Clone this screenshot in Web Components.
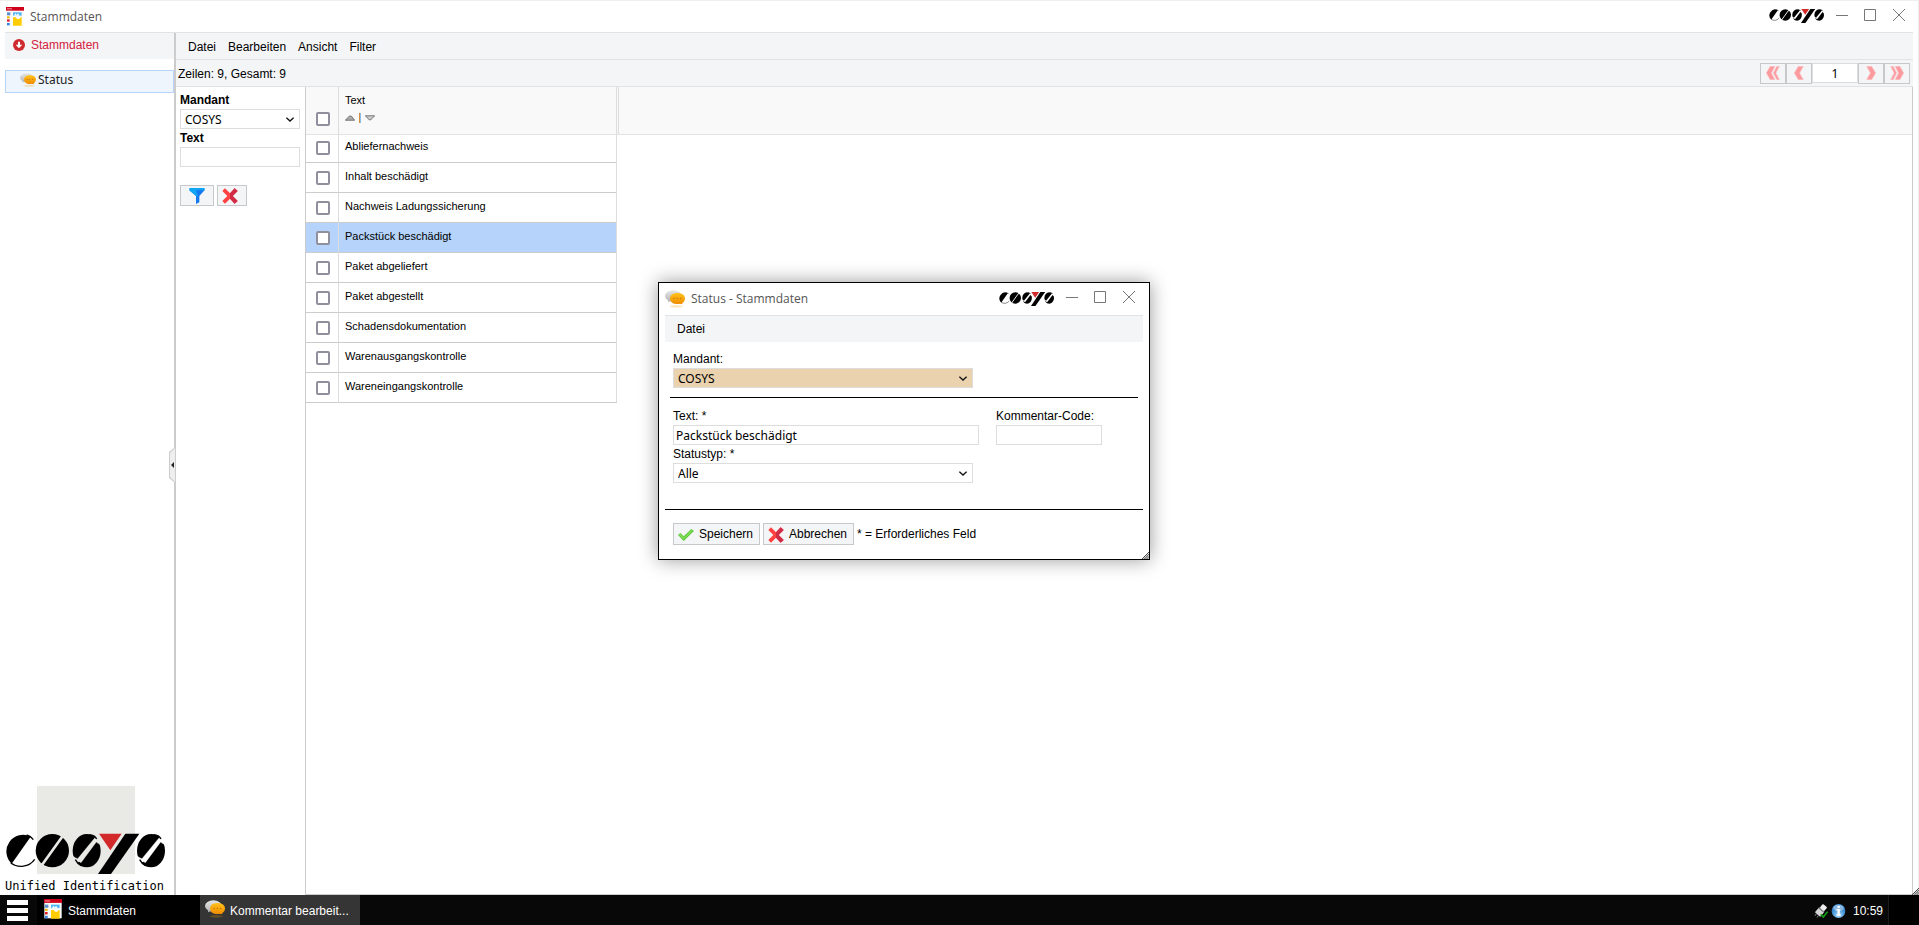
<!DOCTYPE html>
<html lang="de">
<head>
<meta charset="utf-8">
<title>Stammdaten</title>
<style>
  html, body { height: 100%; }
  body { margin: 0; overflow: hidden; font: 12px/16px "Liberation Sans", Arial, sans-serif; color: #000; background: #fff; }
</style>
</head>
<body>
<cosys-desktop></cosys-desktop>
<script>
const UI = '"Noto Sans", "Open Sans", sans-serif';
const base = `*, *::before { box-sizing: border-box; } button, input, select { font: inherit; color: inherit; margin: 0; }`;

function define(name, html) {
  const template = document.createElement('template');
  customElements.define(name, class extends HTMLElement {
    constructor() {
      super();
      this.attachShadow({ mode: 'open' });
    }
    connectedCallback() {
      if (this.shadowRoot.childNodes.length) return;
      template.innerHTML = typeof html === 'function' ? html(this) : html;
      this.shadowRoot.append(template.content.cloneNode(true));
    }
  });
}

const icons = {
  app: ['0 0 54 57', `<path fill="#fafbfc" d="M1 9h52v46H1z"/><path fill="#d0021b" d="M0 0h54v11H0z"/><path fill="#f49aa6" d="M3 4h15v3H3z"/><path fill="#5d8fd0" d="M3 16h10v9H3z"/><path fill="#f6b800" d="M3 28h8v6H3z"/><path fill="#e02030" d="M3 37h8v7H3z"/><path fill="#2d7fe0" d="M3 48h8v7H3z"/><path fill="#50b4f5" d="M21 16h26v10H21z"/><path fill="#fff" d="M24 26l4-7 4 5 4-5 5 7z"/><path fill="#fc0" d="M21 31h8l4 5h7l4-5h3v25H21z"/>`],
  chat: ['0 0 60 54', `<defs><linearGradient id="a" x2="0" y2="1"><stop stop-color="#ffc21c"/><stop offset="1" stop-color="#f08c00"/></linearGradient><linearGradient id="b" x2="0" y2="1"><stop stop-color="#e6e6e6"/><stop offset="1" stop-color="#b5b5b5"/></linearGradient></defs><ellipse cx="34" cy="49" rx="20" ry="4" fill="#f5a000" opacity=".25"/><path fill="#bbb" d="M10 28l-1 9 10-5z"/><ellipse cx="25" cy="18" rx="25" ry="17" fill="url(#b)"/><path fill="#f08c00" d="M51 36l1 7-10-3z"/><rect x="15" y="9" width="45" height="33" rx="20" ry="16" fill="url(#a)"/><g fill="#b56a00"><circle cx="27" cy="25" r="2"/><circle cx="37" cy="25" r="2"/><circle cx="47" cy="25" r="2"/></g>`],
  down: ['0 0 36 36', `<circle cx="18" cy="18" r="18" fill="#cf2a2e"/><path fill="#fff" d="M15 8h6v9h7L18 28 8 17h7z"/>`],
  funnel: ['0 0 48 48', `<path fill="#1478f0" d="M0 5h48L31 24v19l-10 5V24z"/><path fill="#10a5f5" d="M1 0h46v7H1zM0 7h21l6 17-4 1z"/>`],
  cross: ['0 0 48 48', `<path fill="#ff4141" d="M9 1l15 15L38 1l9 8-15 15 15 15-9 8-14-15L9 47l-8-8 15-15L1 9z"/><path fill="#d02c46" d="M38 1l9 8-15 15 15 15-9 8-14-15V16z"/>`],
  check: ['0 0 48 36', `<path fill="#5dc93c" d="M0 18l7-6 10 10L40 0l8 6-31 30z"/><path fill="#8be05e" d="M3 18l4-3 10 11L40 4l3 2-26 25z"/>`],
  prev: ['0 0 30 40', `<path fill="#fc9a9e" stroke="#f7c4c7" stroke-width="2" d="M13 1h15L17 20l11 19H13L1 20z"/>`],
  first: ['0 0 44 40', `<g fill="#fc9a9e" stroke="#f7c4c7" stroke-width="2"><path d="M13 1h15L17 20l11 19H13L1 20z"/><path d="M34 1h8L31 20l11 19h-8L23 20z"/></g>`],
  up: ['0 0 28 16', `<path fill="#aaa" stroke="#555" stroke-width="2" d="M1 14h26L18 3h-6z"/>`],
  triDown: ['0 0 28 16', `<path fill="#ccc" stroke="#555" stroke-width="2" d="M1 2h26L16 13h-4z"/>`],
  chevron: ['0 0 22 14', `<path fill="none" stroke="#111" stroke-width="4" d="M1 2l10 9L21 2"/>`],
  min: ['0 0 36 36', `<path stroke="#777" stroke-width="3" d="M0 19.500h36"/>`],
  max: ['0 0 36 36', `<path fill="none" stroke="#777" stroke-width="3" d="M1.500 1.500h33v33h-33z"/>`],
  close: ['0 0 36 36', `<path stroke="#777" stroke-width="3" d="M0 0l36 36M36 0L0 36"/>`],
  bars: ['0 0 63 63', `<path fill="#fff" d="M0 0h63v15H0zM0 24h63v15H0zM0 48h63v15H0z"/>`],
  plug: ['0 0 42 42', `<g transform="rotate(40 20 20)"><rect x="12" y="0" width="17" height="15" rx="3" fill="#eee"/><rect x="10" y="15" width="21" height="20" rx="2" fill="#d5d5d5"/><path fill="#777" d="M10 16h21v3H10zM15 35h3v8h-3zM23 35h3v8h-3z"/></g><path fill="none" stroke="#12a012" stroke-width="5" d="M20 31l8 8 13-16"/>`],
  info: ['0 0 46 42', `<defs><radialGradient id="c" cx=".5" cy=".8"><stop stop-color="#a9dcff"/><stop offset="1" stop-color="#3b8ad0"/></radialGradient></defs><circle cx="23" cy="21" r="21" fill="url(#c)"/><ellipse cx="23" cy="12" rx="16" ry="10" fill="#fff" opacity=".4"/><path fill="#fff" d="M20 6h7v6h-7zM17 15h10v16h3v4H17v-4h3V19h-3z"/>`],
  grip: ['0 0 8 8', `<path fill="none" stroke="#333" d="M0 8l8-8M2 8l6-6M4 8l4-4M6 8l2-2"/>`]
};

define('ui-icon', el => {
  const [box, art] = icons[el.getAttribute('name')];
  const w = el.getAttribute('w'), h = el.getAttribute('h') || w;
  return `<style>:host{display:inline-block;flex:none;width:${w}px;height:${h}px}svg{display:block;width:100%;height:100%}:host([flip]) svg{transform:rotate(180deg)}</style><svg viewBox="${box}" preserveAspectRatio="none" aria-hidden="true">${art}</svg>`;
});

/* Company word mark; the "plate" attribute adds the grey square behind it. */
define('cosys-logo', el => {
  const plate = el.hasAttribute('plate');
  return `<style>:host{display:block;flex:none}svg{display:block;width:100%;height:auto}</style>
<svg viewBox="${plate ? '15 48 480 264' : '15 190 480 124'}" role="img" aria-label="COSYS">
<defs><mask id="m" maskUnits="userSpaceOnUse" x="0" y="0" width="520" height="330"><path fill="#fff" d="M0 0h520v330H0z"/><path stroke="#000" stroke-width="8" d="M192 193L121 292"/><path stroke="#000" d="M284 204l8 4 16-2v22l-14-8-5-4-46 62-5-3-28 8v-30l16 10 7 3z"/><path stroke="#000" d="M477 204l8 4 16-2v22l-14-8-5-4-46 62-5-3-28 8v-30l16 10 7 3z"/></mask></defs>
${plate ? '<path fill="#e9eae6" d="M111 48h294v264H111z"/>' : ''}
<path d="M92 200A50 50 0 0 0 35 281z"/>
<path fill="none" stroke="#000" stroke-width="4" d="M80 195q12 3 20 14M32 278A50 50 0 0 0 104 268"/>
<g mask="url(#m)"><circle cx="157" cy="242" r="50"/><ellipse cx="260" cy="242" rx="42" ry="50"/><ellipse cx="453" cy="242" rx="42" ry="50"/></g>
<path fill="none" stroke="#000" stroke-width="4" d="M268 194q16 1 22 13M226 269q6 12 18 18M461 194q16 1 22 13M419 269q6 12 18 18"/>
<path fill="#d2292b" d="M297 191h68l-34 50z"/><path d="M376 191h42l-85 121h-39z"/></svg>`;
});

/* Window caption: icon, title, logo and the three window buttons. */
define('window-caption', `<style>${base}
:host{display:flex;align-items:center;height:32px;font-family:"Open Sans","Noto Sans",sans-serif;color:#555;border-bottom:1px solid #e2e3e5}
span{flex:1;padding-left:6px}
cosys-logo{width:55px;margin-right:12px}
button{display:block;border:0;padding:0;background:none;margin-right:16px}
button:last-child{margin:0 8px 0 1px}
</style><slot name="icon"></slot><span><slot></slot></span><cosys-logo></cosys-logo>
<button aria-label="Minimieren"><ui-icon name="min" w="12"></ui-icon></button><button aria-label="Maximieren"><ui-icon name="max" w="12"></ui-icon></button><button aria-label="Schließen"><ui-icon name="close" w="12"></ui-icon></button>`);

define('menu-bar', el => `<style>${base}
:host{display:flex;gap:12px;align-items:center;height:27px;padding:0 12px;background:#f4f5f7}
button{border:0;padding:0;background:none}
</style>${el.getAttribute('items').split(',').map(t => `<button>${t}</button>`).join('')}`);

/* Labelled drop-down. */
define('select-field', el => `<style>${base}
:host{display:block}
label{display:block;line-height:18px;font-weight:var(--label-weight,normal)}
div{display:grid;align-items:center}
select{grid-area:1/1;appearance:none;width:100%;height:20px;padding:1px 4px 0;border:1px solid #ddd;border-radius:0;font-family:${UI};background:var(--field-bg,#fff)}
ui-icon{grid-area:1/1;justify-self:end;margin-right:6px;pointer-events:none}
</style><label for="f">${el.getAttribute('label')}</label><div><select id="f"><option>${el.getAttribute('value')}</option></select><ui-icon name="chevron" w="8" h="5"></ui-icon></div>`);

/* Labelled text box. */
define('text-field', el => `<style>${base}
:host{display:block}
label{display:block;line-height:18px;font-weight:var(--label-weight,normal)}
input{display:block;width:100%;height:20px;padding:0 2px;border:1px solid #ddd;border-radius:0;font-family:${UI}}
</style><label for="f">${el.getAttribute('label')}</label><input id="f" type="text" value="${el.getAttribute('value') || ''}">`);

define('side-nav', `<style>${base}
:host{display:flex;flex-direction:column;width:169px}
a{display:flex;align-items:center;text-decoration:none}
.head{height:26px;padding:0 0 2px 8px;gap:6px;color:#d4213d;background:#f4f5f7}
.item{height:23px;margin-top:11px;padding:0 0 4px 14px;gap:2px;color:#222;font-family:${UI};background:#eef5fd;border:1px solid #b6d4fb}
footer{margin-top:auto;display:flex;flex-direction:column}
cosys-logo{width:160px}
footer span{font:12px/20px "DejaVu Sans Mono",monospace;height:21px;padding-top:2px}
</style>
<a class="head" href="#stammdaten"><ui-icon name="down" w="12"></ui-icon>Stammdaten</a>
<a class="item" href="#status"><ui-icon name="chat" w="16" h="14"></ui-icon>Status</a>
<footer><cosys-logo plate></cosys-logo><span>Unified Identification</span></footer>`);

define('grid-pager', `<style>${base}
:host{display:flex;align-items:center}
button{display:flex;align-items:center;justify-content:center;width:26px;height:21px;padding:0;border:1px solid #c6c8ca;background:#f4f5f7}
input{width:46px;height:20px;padding:0;border:1px solid #ddd;text-align:center;font-family:${UI}}
</style><button aria-label="Erste Seite"><ui-icon name="first" w="14" h="14"></ui-icon></button><button aria-label="Vorherige Seite"><ui-icon name="prev" w="10" h="14"></ui-icon></button><input type="text" value="1" aria-label="Seite"><button aria-label="Nächste Seite"><ui-icon name="prev" w="10" h="14" flip></ui-icon></button><button aria-label="Letzte Seite"><ui-icon name="first" w="14" h="14" flip></ui-icon></button>`);

define('filter-panel', `<style>${base}
:host{display:block;width:129px;padding:4px 5px 0 4px;--label-weight:bold}
nav{display:flex;gap:3px;margin-top:18px}
button{display:flex;align-items:center;justify-content:center;height:21px;width:34px;padding:0;border:1px solid #c6c8ca;background:#f4f5f7}
button+button{width:30px;padding-right:4px}
</style><select-field label="Mandant" value="COSYS"></select-field><text-field label="Text"></text-field>
<nav><button aria-label="Filtern"><ui-icon name="funnel" w="16"></ui-icon></button><button aria-label="Filter löschen"><ui-icon name="cross" w="16"></ui-icon></button></nav>`);

const rows = ['Abliefernachweis', 'Inhalt beschädigt', 'Nachweis Ladungssicherung', 'Packstück beschädigt', 'Paket abgeliefert', 'Paket abgestellt', 'Schadensdokumentation', 'Warenausgangskontrolle', 'Wareneingangskontrolle'];
define('data-grid', `<style>${base}
:host{display:block;border:1px solid #ccc;border-top:0;background:linear-gradient(#f9f9f9 47px,#e2e3e5 47px 48px,#fff 48px);overflow:hidden}
table{border-collapse:separate;border-spacing:0;table-layout:fixed;width:313px;font-size:11px;line-height:14px}
th,td{height:30px;padding:0 6px 9px;text-align:left;vertical-align:bottom;font-weight:normal;border-right:1px solid #ddd;border-bottom:1px solid #ccc}
th{height:48px;border-bottom-color:#e2e3e5}
tbody tr:first-child td{height:28px}
tr>:first-child{width:33px;padding:0 0 7px 10px}
thead tr>:first-child{padding-bottom:8px}
tr>:nth-child(2){width:278px}
th:last-child{width:2px;padding:0}
.selected td{background:#b6d4fb}
input{appearance:none;display:block;width:14px;height:14px;border:2px solid #8f8f9d;border-radius:2px;background:#fff}
.sort{display:flex;align-items:center;gap:4px;height:14px;margin-top:4px}
.sort i{width:2px;height:10px;background:linear-gradient(90deg,#d98a3d 50%,#8bbcf0 50%)}
</style><table><thead><tr><th><input type="checkbox" aria-label="Alle auswählen"></th><th>Text<div class="sort"><ui-icon name="up" w="10" h="6"></ui-icon><i></i><ui-icon name="triDown" w="10" h="6"></ui-icon></div></th><th></th></tr></thead><tbody>
${rows.map((t, i) => `<tr${i === 3 ? ' class="selected"' : ''}><td><input type="checkbox" aria-label="${t}"></td><td>${t}</td></tr>`).join('')}</tbody></table>`);

define('main-window', `<style>${base}
:host{display:grid;grid-template-rows:auto 1fr;padding:0 5px;border-top:1px solid #eee;border-right:1px solid #eee;position:relative;min-height:0}
window-caption{padding-left:1px}
.body{display:grid;grid-template-columns:auto 2px 1fr;min-height:0}
.split{position:relative;background:#ccc}
.split button{position:absolute;right:1px;top:50%;width:6px;height:36px;margin-top:-17px;padding:0;border:0;background:#ccc;clip-path:polygon(100% 0,0 5px,0 31px,100% 100%)}
.split button::before{content:"";position:absolute;inset:1px 0 1px 1px;background:#eee;clip-path:polygon(100% 0,0 5px,0 29px,100% 100%)}
.split button::after{content:"";position:absolute;right:1px;top:15px;border:solid transparent;border-width:3px 3px 3px 0;border-right-color:#222}
.work{display:grid;grid-template-rows:auto auto 1fr;min-height:0}
menu-bar{border-bottom:1px solid #e2e3e5;padding-top:2px;box-sizing:border-box}
.count{display:flex;justify-content:space-between;align-items:center;height:27px;padding:0 3px 0 2px;background:#f4f5f7;border-bottom:1px solid #e2e3e5}
.count span{padding-top:2px}
.pane{display:grid;grid-template-columns:auto 1fr;min-height:0}
ui-icon.grip{position:absolute;right:-1px;bottom:0}
</style><window-caption><ui-icon slot="icon" name="app" w="18" h="19"></ui-icon>Stammdaten</window-caption>
<div class="body"><side-nav></side-nav><div class="split"><button aria-label="Navigation einklappen"></button></div>
<div class="work"><menu-bar items="Datei,Bearbeiten,Ansicht,Filter"></menu-bar>
<div class="count"><span>Zeilen: 9, Gesamt: 9</span><grid-pager></grid-pager></div>
<div class="pane"><filter-panel></filter-panel><data-grid></data-grid></div></div></div><ui-icon class="grip" name="grip" w="7"></ui-icon>`);

define('status-dialog', `<style>${base}
:host{display:block;width:492px;padding:0 6px 14px;border:1px solid #000;background:#fff;box-shadow:0 0 18px rgba(0,0,0,.4)}
window-caption{height:33px}
menu-bar{height:26px}
form{padding-top:8px}
.form{padding:0 8px}
select-field{width:300px;--field-bg:var(--mark,#fff)}
.client{--mark:#ead2ae}
hr{border:0;border-top:1px solid #000;margin:9px 5px 9px}
hr.full{margin:26px 0 13px}
.cols{display:flex;gap:17px}
.wide{width:306px}.code{width:106px}
.actions{display:flex;align-items:center;gap:3px;padding:0 8px}
button{display:flex;align-items:center;gap:5px;height:22px;min-width:87px;padding:0 4px;border:1px solid #c6c8ca;background:#f4f5f7}
button+button{min-width:91px}
button ui-icon{margin-top:2px}
.grip{position:absolute;right:0;bottom:0}
</style><window-caption><ui-icon slot="icon" name="chat" w="20" h="18"></ui-icon>Status - Stammdaten</window-caption>
<menu-bar items="Datei"></menu-bar>
<form onsubmit="return false"><div class="form"><select-field class="client" label="Mandant:" value="COSYS"></select-field></div><hr>
<div class="form"><div class="cols"><text-field class="wide" label="Text: *" value="Packstück beschädigt"></text-field><text-field class="code" label="Kommentar-Code:"></text-field></div>
<select-field label="Statustyp: *" value="Alle"></select-field></div><hr class="full">
<div class="actions"><button><ui-icon name="check" w="16" h="12"></ui-icon>Speichern</button><button><ui-icon name="cross" w="16"></ui-icon>Abbrechen</button><span>* = Erforderliches Feld</span></div></form><ui-icon class="grip" name="grip" w="7"></ui-icon>`);

define('task-bar', `<style>${base}
:host{display:flex;height:30px;background:#080808;color:#fff}
button{display:flex;align-items:center;border:0;padding:0;background:#000;text-align:left}
.menu{width:36px;padding-left:7px;margin-right:1px;background:#080808}
.task{width:163px;padding:1px 0 0 7px;gap:6px}
.task.on{width:160px;padding-left:5px;gap:5px;background:#353535}
.task ui-icon{margin-bottom:3px}
.tray{display:flex;align-items:center;gap:3px;margin-left:auto;padding:1px 5px 0 0}
time{padding-left:4px}
.end{width:31px;background:#000;border-left:1px solid #1c1c1c}
</style><button class="menu" aria-label="Menü"><ui-icon name="bars" w="21"></ui-icon></button><button class="task"><ui-icon name="app" w="18" h="20"></ui-icon>Stammdaten</button><button class="task on"><ui-icon name="chat" w="20" h="18"></ui-icon>Kommentar bearbeit...</button>
<div class="tray"><ui-icon name="plug" w="14"></ui-icon><ui-icon name="info" w="15" h="14"></ui-icon><time>10:59</time></div><button class="end" aria-label="Desktop anzeigen"></button>`);

define('cosys-desktop', `<style>${base}
:host{display:grid;grid-template-rows:1fr auto;height:100vh;position:relative}
status-dialog{position:absolute;left:658px;top:282px}
</style><main-window></main-window><task-bar></task-bar><status-dialog></status-dialog>`);
</script>
</body>
</html>
